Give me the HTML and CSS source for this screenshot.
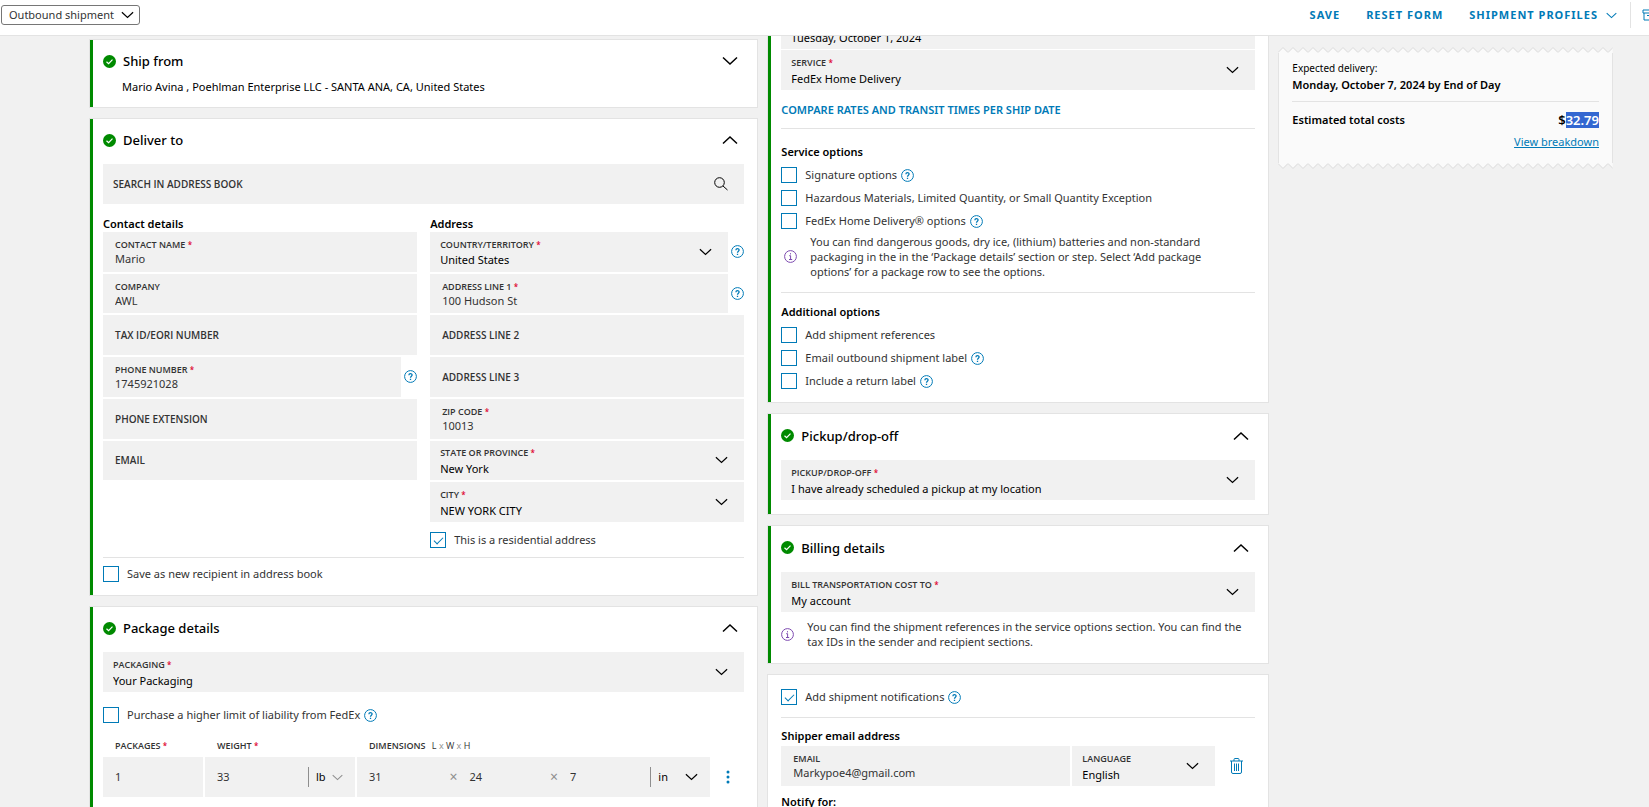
FILE: index.html
```html
<!DOCTYPE html>
<html lang="en">
<head>
    <meta charset="UTF-8">
    <meta name="viewport" content="width=device-width, initial-scale=1.0">
    <title>Create shipment</title>
    <link rel="stylesheet" href="styles.css">
</head>
<body>
    <!-- Shared icons -->
    <svg class="sprite" aria-hidden="true">
        <symbol id="down" viewBox="0 0 16 10"><path d="M1 1.5 8 8l7-6.5"/></symbol>
        <symbol id="up" viewBox="0 0 16 10"><path d="M1 8.5 8 2l7 6.5"/></symbol>
        <symbol id="check" viewBox="0 0 13 13"><circle cx="6.5" cy="6.5" r="6.5" fill="#008a00"/><path d="M3.5 6.7 5.6 8.7 9.5 4.6" fill="none" stroke="#fff" stroke-width="1.2"/></symbol>
        <symbol id="help" viewBox="0 0 13 13"><circle cx="6.5" cy="6.5" r="5.9"/><path d="M4.9 5.2C4.9 3.2 8.1 3.2 8.1 5.1 8.1 6.2 6.5 6.2 6.5 7.7M6.5 8.7V9.9" stroke-width="1.3"/></symbol>
        <symbol id="info" viewBox="0 0 13 13"><circle cx="6.5" cy="6.5" r="5.9"/><path d="M5.2 5.7H6.6V9.5M5 9.5H8.2M6.5 3.2V4.4"/></symbol>
    </svg>

    <header class="topbar">
        <div class="type-select">
            <select aria-label="Shipment type"><option>Outbound shipment</option></select>
            <svg class="chevron chevron-type"><use href="#down"/></svg>
        </div>
        <nav class="actions">
            <button type="button">SAVE</button>
            <button type="button">RESET FORM</button>
            <button type="button">SHIPMENT PROFILES <svg class="chevron"><use href="#down"/></svg></button>
            <button type="button" class="address-book" aria-label="Address book">
                <svg viewBox="0 0 16 12"><path d="M1 1H15V4H1ZM2 4V11H14V4M5 6.5H11"/></svg>
            </button>
        </nav>
    </header>

    <main>
        <div class="column">
            <section class="card done">
                <div class="card-head">
                    <svg class="check"><use href="#check"/></svg>
                    <h2>Ship from</h2>
                    <button type="button" aria-label="Expand"><svg class="chevron"><use href="#down"/></svg></button>
                </div>
                <p class="summary">Mario Avina , Poehlman Enterprise LLC - SANTA ANA, CA, United States</p>
            </section>

            <section class="card done deliver">
                <div class="card-head">
                    <svg class="check"><use href="#check"/></svg>
                    <h2>Deliver to</h2>
                    <button type="button" aria-label="Collapse"><svg class="chevron"><use href="#up"/></svg></button>
                </div>
                <div class="field empty search">
                    <label for="search">SEARCH IN ADDRESS BOOK</label>
                    <input id="search" type="text">
                    <svg class="search-icon" viewBox="0 0 14 14"><circle cx="5.5" cy="5.5" r="4.8"/><path d="M9 9 13.5 13"/></svg>
                </div>
                <div class="two-col">
                    <div>
                        <h3>Contact details</h3>
                        <div class="fields">
                            <div class="field">
                                <label for="name">CONTACT NAME <i>*</i></label>
                                <input id="name" type="text" value="Mario">
                            </div>
                            <div class="field">
                                <label for="company">COMPANY</label>
                                <input id="company" type="text" value="AWL">
                            </div>
                            <div class="field empty">
                                <label for="tax">TAX ID/EORI NUMBER</label>
                                <input id="tax" type="text">
                            </div>
                            <div class="with-help">
                                <div class="field">
                                    <label for="phone">PHONE NUMBER <i>*</i></label>
                                    <input id="phone" type="text" value="1745921028">
                                </div>
                                <svg class="help"><use href="#help"/></svg>
                            </div>
                            <div class="field empty">
                                <label for="ext">PHONE EXTENSION</label>
                                <input id="ext" type="text">
                            </div>
                            <div class="field empty">
                                <label for="email">EMAIL</label>
                                <input id="email" type="text">
                            </div>
                        </div>
                    </div>
                    <div>
                        <h3>Address</h3>
                        <div class="fields">
                            <div class="with-help">
                                <div class="field select">
                                    <label for="country">COUNTRY/TERRITORY <i>*</i></label>
                                    <select id="country"><option>United States</option></select>
                                    <svg class="chevron"><use href="#down"/></svg>
                                </div>
                                <svg class="help"><use href="#help"/></svg>
                            </div>
                            <div class="with-help">
                                <div class="field">
                                    <label for="line1">ADDRESS LINE 1 <i>*</i></label>
                                    <input id="line1" type="text" value="100 Hudson St">
                                </div>
                                <svg class="help"><use href="#help"/></svg>
                            </div>
                            <div class="field empty">
                                <label for="line2">ADDRESS LINE 2</label>
                                <input id="line2" type="text">
                            </div>
                            <div class="field empty">
                                <label for="line3">ADDRESS LINE 3</label>
                                <input id="line3" type="text">
                            </div>
                            <div class="field">
                                <label for="zip">ZIP CODE <i>*</i></label>
                                <input id="zip" type="text" value="10013">
                            </div>
                            <div class="field select">
                                <label for="state">STATE OR PROVINCE <i>*</i></label>
                                <select id="state"><option>New York</option></select>
                                <svg class="chevron"><use href="#down"/></svg>
                            </div>
                            <div class="field select">
                                <label for="city">CITY <i>*</i></label>
                                <select id="city"><option>NEW YORK CITY</option></select>
                                <svg class="chevron"><use href="#down"/></svg>
                            </div>
                        </div>
                        <div class="option residential">
                            <input id="residential" type="checkbox" checked>
                            <label for="residential">This is a residential address</label>
                        </div>
                    </div>
                </div>
                <hr>
                <div class="option save-recipient">
                    <input id="save-recipient" type="checkbox">
                    <label for="save-recipient">Save as new recipient in address book</label>
                </div>
            </section>

            <section class="card done">
                <div class="card-head">
                    <svg class="check"><use href="#check"/></svg>
                    <h2>Package details</h2>
                    <button type="button" aria-label="Collapse"><svg class="chevron"><use href="#up"/></svg></button>
                </div>
                <div class="field select">
                    <label for="packaging">PACKAGING <i>*</i></label>
                    <select id="packaging"><option>Your Packaging</option></select>
                    <svg class="chevron"><use href="#down"/></svg>
                </div>
                <div class="option liability">
                    <input id="liability" type="checkbox">
                    <label for="liability">Purchase a higher limit of liability from FedEx</label>
                    <svg class="help"><use href="#help"/></svg>
                </div>
                <div class="package">
                    <label for="packages">PACKAGES <i>*</i></label>
                    <label for="weight">WEIGHT <i>*</i></label>
                    <label for="length">DIMENSIONS <small>L <em>x</em> W <em>x</em> H</small></label>
                    <span></span>
                    <div class="cell"><input id="packages" type="text" value="1"></div>
                    <div class="cell">
                        <input id="weight" type="text" value="33">
                        <select class="unit" aria-label="Weight unit"><option>lb</option></select>
                        <svg class="chevron muted"><use href="#down"/></svg>
                    </div>
                    <div class="cell dimensions">
                        <input id="length" type="text" value="31">
                        <em>×</em>
                        <input type="text" value="24" aria-label="Width">
                        <em>×</em>
                        <input type="text" value="7" aria-label="Height">
                        <select class="unit unit-size" aria-label="Size unit"><option>in</option></select>
                        <svg class="chevron"><use href="#down"/></svg>
                    </div>
                    <button type="button" class="more" aria-label="Package options">
                        <svg viewBox="0 0 4 14"><circle cx="2" cy="2" r="1.5"/><circle cx="2" cy="7" r="1.5"/><circle cx="2" cy="12" r="1.5"/></svg>
                    </button>
                </div>
            </section>
        </div>

        <div class="column scrolled">
            <section class="card done rates">
                <div class="field select">
                    <label for="date">SHIP DATE <i>*</i></label>
                    <select id="date"><option>Tuesday, October 1, 2024</option></select>
                </div>
                <div class="field select service">
                    <label for="service">SERVICE <i>*</i></label>
                    <select id="service"><option>FedEx Home Delivery</option></select>
                    <svg class="chevron"><use href="#down"/></svg>
                </div>
                <a class="compare" href="#">COMPARE RATES AND TRANSIT TIMES PER SHIP DATE</a>
                <hr>
                <div class="options">
                    <h3>Service options</h3>
                    <div class="option">
                        <input id="signature" type="checkbox">
                        <label for="signature">Signature options</label>
                        <svg class="help"><use href="#help"/></svg>
                    </div>
                    <div class="option">
                        <input id="hazardous" type="checkbox">
                        <label for="hazardous">Hazardous Materials, Limited Quantity, or Small Quantity Exception</label>
                    </div>
                    <div class="option">
                        <input id="home" type="checkbox">
                        <label for="home">FedEx Home Delivery® options</label>
                        <svg class="help"><use href="#help"/></svg>
                    </div>
                </div>
                <div class="note note-service">
                    <svg class="info"><use href="#info"/></svg>
                    <p>You can find dangerous goods, dry ice, (lithium) batteries and non-standard packaging in the in the ‘Package details’ section or step. Select ‘Add package options’ for a package row to see the options.</p>
                </div>
                <hr>
                <div class="options additional">
                    <h3>Additional options</h3>
                    <div class="option">
                        <input id="references" type="checkbox">
                        <label for="references">Add shipment references</label>
                    </div>
                    <div class="option">
                        <input id="email-label" type="checkbox">
                        <label for="email-label">Email outbound shipment label</label>
                        <svg class="help"><use href="#help"/></svg>
                    </div>
                    <div class="option">
                        <input id="return-label" type="checkbox">
                        <label for="return-label">Include a return label</label>
                        <svg class="help"><use href="#help"/></svg>
                    </div>
                </div>
            </section>

            <section class="card done">
                <div class="card-head">
                    <svg class="check"><use href="#check"/></svg>
                    <h2>Pickup/drop-off</h2>
                    <button type="button" aria-label="Collapse"><svg class="chevron"><use href="#up"/></svg></button>
                </div>
                <div class="field select">
                    <label for="pickup">PICKUP/DROP-OFF <i>*</i></label>
                    <select id="pickup"><option>I have already scheduled a pickup at my location</option></select>
                    <svg class="chevron"><use href="#down"/></svg>
                </div>
            </section>

            <section class="card done">
                <div class="card-head">
                    <svg class="check"><use href="#check"/></svg>
                    <h2>Billing details</h2>
                    <button type="button" aria-label="Collapse"><svg class="chevron"><use href="#up"/></svg></button>
                </div>
                <div class="field select">
                    <label for="bill">BILL TRANSPORTATION COST TO <i>*</i></label>
                    <select id="bill"><option>My account</option></select>
                    <svg class="chevron"><use href="#down"/></svg>
                </div>
                <div class="note">
                    <svg class="info"><use href="#info"/></svg>
                    <p>You can find the shipment references in the service options section. You can find the tax IDs in the sender and recipient sections.</p>
                </div>
            </section>

            <section class="card notifications">
                <div class="option">
                    <input id="notify" type="checkbox" checked>
                    <label for="notify">Add shipment notifications</label>
                    <svg class="help"><use href="#help"/></svg>
                </div>
                <hr>
                <h3>Shipper email address</h3>
                <div class="email-row">
                    <div class="field">
                        <label for="shipper-email">EMAIL</label>
                        <input id="shipper-email" type="text" value="Markypoe4@gmail.com">
                    </div>
                    <div class="field select">
                        <label for="language">LANGUAGE</label>
                        <select id="language"><option>English</option></select>
                        <svg class="chevron"><use href="#down"/></svg>
                    </div>
                    <button type="button" aria-label="Remove email">
                        <svg class="trash" viewBox="0 0 13 16"><path d="M0 3H13M4 3V1.5Q4 .5 5 .5H8Q9 .5 9 1.5V3M1.5 3V14Q1.5 15.5 3 15.5H10Q11.5 15.5 11.5 14V3M4.500 5.5V13M6.5 5.5V13M8.5 5.5V13"/></svg>
                    </button>
                </div>
                <h3 class="notify-for">Notify for:</h3>
            </section>
        </div>

        <aside class="receipt">
            <svg class="zigzag"><defs><pattern id="teeth" width="10" height="6" patternUnits="userSpaceOnUse"><path d="M0 6 5 1 10 6Z" fill="#fafafa"/><path d="M0 5.5 5 .5 10 5.5" fill="none" stroke="#dcdcdc"/></pattern></defs><rect width="100%" height="6" fill="url(#teeth)"/></svg>
            <div class="receipt-body">
                <p class="small">Expected delivery:</p>
                <p class="strong">Monday, October 7, 2024 by End of Day</p>
                <hr>
                <div class="total">
                    <span>Estimated total costs</span>
                    <span class="price">$<mark>32.79</mark></span>
                </div>
                <a href="#">View breakdown</a>
            </div>
            <svg class="zigzag flip"><rect width="100%" height="6" fill="url(#teeth)"/></svg>
        </aside>
    </main>
</body>
</html>
```
FILE: styles.css
```css
/* General Page Styles */
* {
    box-sizing: border-box;
}

body {
    display: flex;
    flex-direction: column;
    height: 100vh;
    margin: 0;
    overflow: hidden;
    background-color: #f1f1f1;
    color: #333;
    font-family: "Noto Sans", "Open Sans", sans-serif;
    font-size: 11px;
    line-height: 16px;
}

h2, h3, p {
    margin: 0;
}

h2 {
    color: #000;
    font-size: 13px;
    font-weight: 500;
    line-height: 20px;
}

h3 {
    color: #000;
    font-size: 11px;
    font-weight: 600;
    line-height: 16px;
}

hr {
    width: 100%;
    height: 1px;
    margin: 0;
    border: none;
    background-color: #e3e3e3;
}

button, input, select {
    margin: 0;
    padding: 0;
    border: none;
    border-radius: 0;
    background: none;
    color: inherit;
    font: inherit;
}

button {
    display: flex;
    align-items: center;
    cursor: pointer;
}

input, select {
    width: 100%;
    min-width: 0;
    outline: none;
    appearance: none;
}

select {
    color: #000;
}

a {
    color: #007ab7;
}

/* Icons */
.sprite {
    position: absolute;
    width: 0;
    height: 0;
}

svg {
    display: block;
    flex: none;
    fill: none;
    stroke: currentColor;
}

.chevron {
    width: 13px;
    height: 8px;
    color: #000;
    stroke-width: 1.5;
    pointer-events: none;
}

.check {
    width: 13px;
    height: 13px;
    stroke: none;
}

.help {
    width: 13px;
    height: 13px;
    color: #007ab7;
}

.info {
    width: 13px;
    height: 13px;
    color: #7d4ab0;
}

/* Top bar */
.topbar {
    z-index: 1;
    display: flex;
    flex: none;
    align-items: flex-start;
    justify-content: space-between;
    height: 36px;
    padding-left: 1px;
    overflow: hidden;
    border-bottom: 1px solid #e3e3e3;
    background-color: #fff;
}

.type-select {
    display: grid;
    grid-template-columns: 1fr 18px;
    align-items: center;
    width: 139px;
    height: 20px;
    margin-top: 5px;
    border: 1px solid #767676;
    border-radius: 3px;
}

.type-select select {
    grid-area: 1 / 1 / 2 / 3;
    padding-left: 7px;
    color: #333;
}

.type-select .chevron {
    grid-area: 1 / 2;
}

.actions {
    display: flex;
    align-items: center;
    gap: 26px;
    height: 30px;
}

.actions button {
    gap: 8px;
    color: #007ab7;
    font-weight: 700;
    letter-spacing: 1px;
}

.actions .chevron {
    width: 11px;
    height: 7px;
    color: inherit;
}

.actions .address-book {
    height: 26px;
    margin-right: -9px;
    margin-left: -13px;
    padding-left: 11px;
    border-left: 1px solid #e3e3e3;
}

.address-book svg {
    width: 16px;
    height: 12px;
}

/* Page columns */
main {
    display: grid;
    grid-template-columns: 4fr 3fr 2fr;
    align-items: start;
    gap: 9px;
    padding: 3px 36px 0 89px;
}

.column {
    display: grid;
    gap: 10px;
}

/* Second column is scrolled partly under the top bar */
.scrolled {
    margin-top: -31px;
}

/* Cards */
.card {
    padding: 0 13px 14px;
    border: 1px solid #e3e3e3;
    background-color: #fff;
}

.done {
    box-shadow: inset 3px 0 #008a00;
}

.deliver, .rates {
    padding-bottom: 13px;
}

.card-head {
    display: grid;
    grid-template-columns: 13px 1fr auto;
    align-items: center;
    gap: 7px;
    height: 45px;
    padding-bottom: 3px;
}

.scrolled .card-head {
    height: 46px;
}

.card-head button {
    padding-right: 6px;
}

.card-head .chevron {
    width: 16px;
    height: 10px;
}

.summary {
    margin-top: -6px;
    padding-left: 19px;
    color: #000;
}

.card:has(.summary) {
    padding-bottom: 12px;
}

/* Fields */
.field {
    display: grid;
    flex: 1;
    align-content: center;
    min-height: 40px;
    padding: 2px 12px 0;
    background-color: #f1f1f1;
}

.field label {
    font-size: 9px;
    font-weight: 600;
    line-height: 12px;
    white-space: nowrap;
}

.field label, .package label {
    font-family: "Open Sans", sans-serif;
}

.field i, .package i {
    color: #de002e;
    font-size: 8px;
    font-style: normal;
}

.field input, .field select {
    height: 16px;
    line-height: 16px;
}

.field.empty {
    padding-top: 0;
}

.field.empty label {
    grid-area: 1 / 1;
    font-size: 10px;
    line-height: 16px;
}

.field.empty input {
    grid-area: 1 / 1;
}

.field.select {
    grid-template-columns: 1fr 13px;
    column-gap: 6px;
    padding: 5px 16px 0 10px;
}

.field.select label {
    grid-column: 1;
}

.field.select select {
    grid-column: 1;
    height: 19px;
}

.field.select .chevron {
    grid-area: 1 / 2 / 3 / 3;
    align-self: start;
    margin-top: 9px;
}

.field.search {
    grid-template-columns: 1fr 14px;
    align-items: center;
    padding: 0 16px 0 10px;
}

.search-icon {
    width: 14px;
    height: 14px;
    color: #000;
}

.two-col {
    display: grid;
    grid-template-columns: 1fr 1fr;
    gap: 13px;
    padding: 12px 0 9px;
}

.fields {
    display: grid;
    grid-template-rows: repeat(7, 1fr);
    gap: 2px;
    height: 290px;
}

.fields .field {
    min-height: 0;
}

.with-help {
    display: flex;
    align-items: stretch;
    gap: 3px;
}

.with-help > .help {
    align-self: center;
}

/* Tick boxes */
.option {
    display: flex;
    align-items: center;
    height: 16px;
}

.option input {
    display: grid;
    flex: none;
    width: 16px;
    height: 16px;
    margin-right: 8px;
    border: 1px solid #007ab7;
    background-color: #fff;
    place-content: center;
}

.option input:checked::before {
    width: 8px;
    height: 4px;
    border-bottom: 1px solid #007ab7;
    border-left: 1px solid #007ab7;
    content: "";
    transform: translateY(-1px) rotate(-45deg);
}

.option .help {
    margin-left: 4px;
}

.options {
    display: grid;
    gap: 7px;
}

.residential {
    margin-top: 10px;
}

.save-recipient {
    margin-top: 8px;
}

/* Package row */
.liability {
    margin: 15px 0;
}

.package {
    display: grid;
    grid-template-columns: 100px 150px 1fr 32px;
    column-gap: 2px;
    row-gap: 3px;
}

.package label {
    padding-left: 12px;
    font-size: 9px;
    font-weight: 600;
}

.package small {
    margin-left: 4px;
    font-size: 9px;
    font-weight: 400;
}

.package em {
    color: #8e8e8e;
    font-style: normal;
}

.cell {
    display: flex;
    align-items: center;
    height: 40px;
    padding: 0 12px;
    background-color: #f1f1f1;
}

.cell em {
    flex: none;
    width: 20px;
    font-size: 14px;
}

.cell .unit {
    flex: none;
    width: 24px;
    height: 20px;
    padding-left: 7px;
    border-left: 1px solid #8e8e8e;
}

.cell .unit-size {
    width: 35px;
}

.muted {
    width: 11px;
    height: 7px;
    color: #8e8e8e;
}

.more {
    justify-content: center;
    color: #007ab7;
}

.more svg {
    width: 4px;
    height: 14px;
    fill: currentColor;
    stroke: none;
}

/* Service card */
.service {
    margin-top: 1px;
}

.compare {
    display: block;
    padding: 12px 0 10px;
    font-weight: 600;
    text-decoration: none;
}

.options h3 {
    padding-top: 15px;
}

.additional h3 {
    padding-top: 11px;
}

.note {
    display: flex;
    align-items: center;
    gap: 13px;
    padding-top: 7px;
}

.note p {
    line-height: 15px;
}

.note-service {
    padding: 5px 16px 13px 3px;
}

/* Notifications */
.notifications {
    padding-top: 14px;
}

.notifications hr {
    margin: 12px 0 10px;
}

.email-row {
    display: grid;
    grid-template-columns: 1fr 143px 38px;
    column-gap: 2px;
    margin-top: 2px;
}

.email-row button {
    justify-content: center;
    color: #007ab7;
}

.trash {
    width: 13px;
    height: 16px;
}

.notify-for {
    margin-top: 8px;
}

/* Cost summary */
.receipt {
    margin-top: 8px;
}

.zigzag {
    width: 100%;
    height: 6px;
    stroke: none;
}

.flip {
    transform: scaleY(-1);
}

.receipt-body {
    padding: 7px 13px 13px;
    border: solid #e3e3e3;
    border-width: 0 1px;
    background-color: #fafafa;
    color: #000;
}

.small {
    font-size: 10px;
}

.strong {
    margin-top: 1px;
    font-weight: 600;
}

.receipt hr {
    margin: 8px 0 10px;
}

.total {
    display: flex;
    align-items: center;
    justify-content: space-between;
    font-weight: 600;
}

.price {
    font-size: 13px;
}

.price mark {
    display: inline-block;
    background-color: #3367d1;
    color: #fff;
}

.receipt a {
    display: block;
    margin-top: 6px;
    text-align: right;
}
```
